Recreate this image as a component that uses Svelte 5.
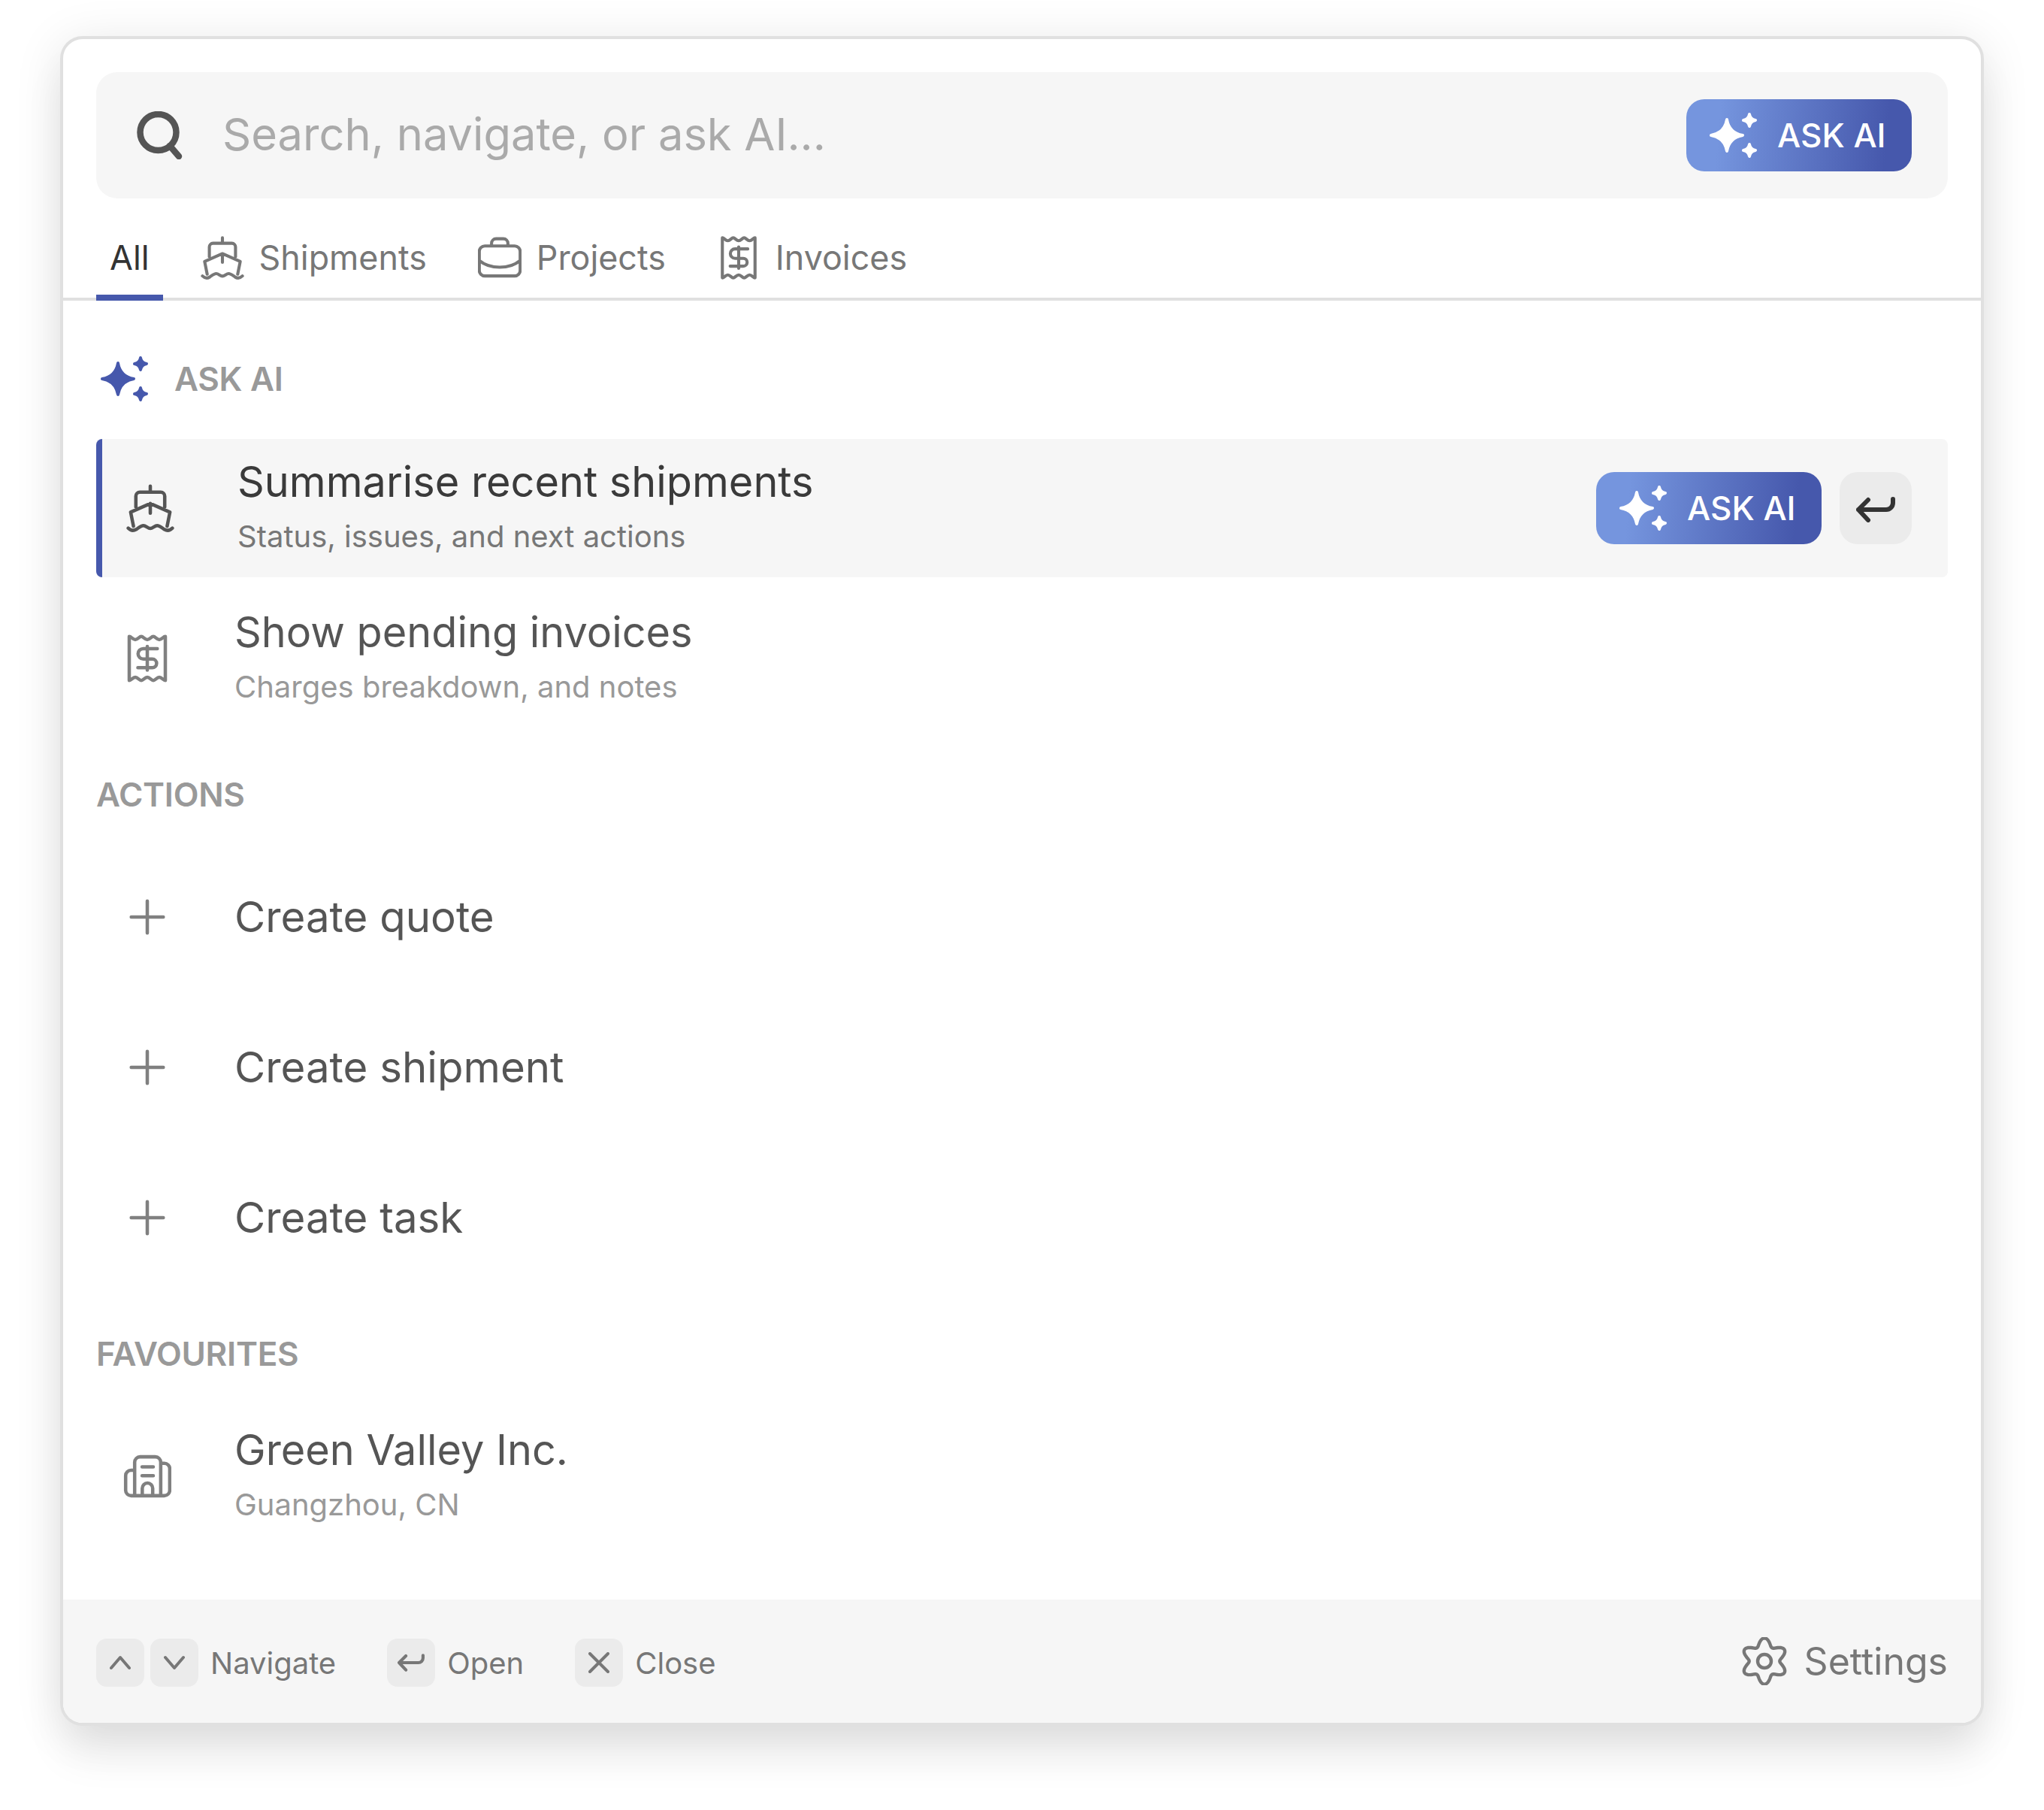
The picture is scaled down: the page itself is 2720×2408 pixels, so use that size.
<script>
	let searchQuery = $state('');

	function star(cx, cy, r) {
		const a = r * 0.1;
		const b = r * 0.42;
		return (
			`M${cx} ${cy - r}C${cx + a} ${cy - b} ${cx + b} ${cy - a} ${cx + r} ${cy}` +
			`C${cx + b} ${cy + a} ${cx + a} ${cy + b} ${cx} ${cy + r}` +
			`C${cx - a} ${cy + b} ${cx - b} ${cy + a} ${cx - r} ${cy}` +
			`C${cx - b} ${cy - a} ${cx - a} ${cy - b} ${cx} ${cy - r}Z`
		);
	}
	const sparkle = star(23, 30, 21) + star(53, 10, 8) + star(53, 50, 8);

	// six soft lobes, top lobe pointing up
	function gearPath() {
		let d = '';
		for (let i = 0; i < 120; i++) {
			const t = (i / 120) * Math.PI * 2;
			const r = 25.5 + 5.2 * Math.cos(6 * t);
			const x = 32 + r * Math.sin(t);
			const y = 32 - r * Math.cos(t);
			d += `${i ? 'L' : 'M'}${x.toFixed(2)} ${y.toFixed(2)}`;
		}
		return d + 'Z';
	}
	const gear = gearPath();

	const icons = {
		ship: 'M12 1v3M4.8 11.5V6a2 2 0 0 1 2-2h10.4a2 2 0 0 1 2 2v5.5M3.6 21 2.2 14 12 9.7 21.8 14l-1.4 7M12 9.7v4.8M1 22c1.2 1.2 2.6 1.4 4 .6 1.2-.8 2.3-1.9 3.6-1.9 1.2 0 2.2 1.4 3.4 1.4s2.2-1.4 3.4-1.4c1.3 0 2.4 1.1 3.6 1.9 1.4.8 2.8.6 4-.6',
		receipt: 'M3 1c1 0 1.7 1.6 3 1.6S8 1 9 1s1.7 1.6 3 1.6S14 1 15 1s1.7 1.6 3 1.6S20 1 21 1v22c-1 0-1.7-1.6-3-1.6S16 23 15 23s-1.7-1.6-3-1.6S10 23 9 23s-1.7-1.6-3-1.6S4 23 3 23ZM17 7.1h-7a2.6 2.6 0 0 0 0 5.2h4.5a2.15 2.15 0 0 1 0 4.3H7.3M12 6v11.8',
		case: 'M3.75 5.5h16.5a3 3 0 0 1 3 3V19a3 3 0 0 1-3 3H3.75a3 3 0 0 1-3-3V8.5a3 3 0 0 1 3-3ZM7.5 5.5V4A2.5 2.5 0 0 1 10 1.5h4A2.5 2.5 0 0 1 16.5 4v1.5M.75 13.5c3 2.5 7 3.7 11.25 3.7s8.25-1.2 11.25-3.7',
		plus: 'M12 4v16M4 12h16',
		building: 'M5.7 21.7V5A2.7 2.7 0 0 1 8.4 2.3h7.6a2.7 2.7 0 0 1 2.7 2.7v16.7M5.7 9H3.9A2.7 2.7 0 0 0 1.2 11.7V19a2.7 2.7 0 0 0 2.7 2.7h16.6a2.7 2.7 0 0 0 2.7-2.7V8.2a2.7 2.7 0 0 0-2.7-2.7h-1.8M9.4 7.3H15M9.4 11.7H15M9.5 21.7V18a2.6 2.6 0 0 1 5.2 0v3.7'
	};

	const tabs = [
		{ label: 'Shipments', icon: 'ship' },
		{ label: 'Projects', icon: 'case' },
		{ label: 'Invoices', icon: 'receipt' }
	];

	const actions = ['Create quote', 'Create shipment', 'Create task'];
</script>

{#snippet icon(name, cls = '')}
	<svg class="icon {cls}" viewBox="0 0 24 24" fill="none" stroke="currentColor" stroke-width="1.7" stroke-linecap="round" stroke-linejoin="round">
		<path d={icons[name]} />
	</svg>
{/snippet}

{#snippet spark(cls)}
	<svg class="spark {cls}" viewBox="0 0 64 60" fill="currentColor" stroke="currentColor" stroke-width="4" stroke-linejoin="round">
		<path d={sparkle} />
	</svg>
{/snippet}

{#snippet askButton()}
	<button class="ask-button">
		{@render spark('')}
		<span>ASK AI</span>
	</button>
{/snippet}

{#snippet enterArrow(cls)}
	<svg class={cls} viewBox="0 0 52 34" fill="none" stroke="currentColor" stroke-width="6" stroke-linecap="round" stroke-linejoin="round">
		<path d="M49 3v5a9 9 0 0 1-9 9H3M16 4 3 17l13 14" />
	</svg>
{/snippet}

<div class="page">
	<div class="palette">
		<!-- Search -->
		<div class="search">
			<svg class="search-icon" viewBox="0 0 64 64" fill="none" stroke="currentColor" stroke-width="8.5" stroke-linecap="round">
				<circle cx="30.5" cy="28" r="24" />
				<path d="M46 46l12 14" />
			</svg>
			<input type="text" placeholder="Search, navigate, or ask AI..." bind:value={searchQuery} />
			{@render askButton()}
		</div>

		<!-- Tabs -->
		<nav class="tabs">
			<button class="tab active">All</button>
			{#each tabs as tab}
				<button class="tab">
					{@render icon(tab.icon, 'tab-icon')}
					{tab.label}
				</button>
			{/each}
		</nav>

		<div class="results">
			<div class="section-title ai-title">
				{@render spark('ai-spark')}
				ASK AI
			</div>

			<div class="row selected">
				<div class="row-icon">{@render icon('ship', 'row-svg')}</div>
				<div class="row-text">
					<div class="row-title">Summarise recent shipments</div>
					<div class="row-sub">Status, issues, and next actions</div>
				</div>
				<div class="row-actions">
					{@render askButton()}
					<span class="enter-key">{@render enterArrow('enter-big')}</span>
				</div>
			</div>

			<div class="row">
				<div class="row-icon">{@render icon('receipt', 'row-svg')}</div>
				<div class="row-text">
					<div class="row-title">Show pending invoices</div>
					<div class="row-sub">Charges breakdown, and notes</div>
				</div>
			</div>

			<div class="section-title">ACTIONS</div>
			{#each actions as action}
				<div class="row">
					<div class="row-icon">{@render icon('plus', 'plus-svg')}</div>
					<div class="row-text single">
						<div class="row-title">{action}</div>
					</div>
				</div>
			{/each}

			<div class="section-title">FAVOURITES</div>
			<div class="row">
				<div class="row-icon">{@render icon('building', 'row-svg')}</div>
				<div class="row-text">
					<div class="row-title">Green Valley Inc.</div>
					<div class="row-sub">Guangzhou, CN</div>
				</div>
			</div>
		</div>

		<!-- Footer -->
		<footer class="footer">
			<div class="hints">
				<div class="hint">
					<span class="key">
						<svg class="key-svg" viewBox="0 0 28 28" fill="none" stroke="currentColor" stroke-width="4" stroke-linecap="round" stroke-linejoin="round"><path d="M2 21 14 7l12 14" /></svg>
					</span>
					<span class="key">
						<svg class="key-svg" viewBox="0 0 28 28" fill="none" stroke="currentColor" stroke-width="4" stroke-linecap="round" stroke-linejoin="round"><path d="M2 7l12 14L26 7" /></svg>
					</span>
					<span class="hint-label">Navigate</span>
				</div>
				<div class="hint">
					<span class="key">{@render enterArrow('enter-small')}</span>
					<span class="hint-label">Open</span>
				</div>
				<div class="hint">
					<span class="key">
						<svg class="key-svg" viewBox="0 0 28 28" fill="none" stroke="currentColor" stroke-width="4" stroke-linecap="round"><path d="M2 2l24 24M26 2 2 26" /></svg>
					</span>
					<span class="hint-label">Close</span>
				</div>
			</div>
			<div class="settings">
				<svg class="gear" viewBox="0 0 64 64" fill="none" stroke="currentColor" stroke-width="4.4" stroke-linejoin="round">
					<path d={gear} />
					<circle cx="32" cy="32" r="9" />
				</svg>
				Settings
			</div>
		</footer>
	</div>
</div>

<style>
	:global(body) {
		margin: 0;
		background: #fff;
	}

	.page {
		width: 2720px;
		height: 2408px;
		padding: 48px 80px 0;
		box-sizing: border-box;
		font-family: Inter, 'Noto Sans', sans-serif;
		overflow: hidden;
	}

	.palette {
		height: 2248px;
		box-sizing: border-box;
		display: flex;
		flex-direction: column;
		background: #fff;
		border: 4px solid #e0e0e0;
		border-radius: 30px;
		overflow: hidden;
		box-shadow: 0 8px 64px rgba(0, 0, 0, 0.1), 0 44px 56px -4px rgba(0, 0, 0, 0.07);
	}

	button {
		font-family: inherit;
		border: none;
		background: none;
		padding: 0;
	}

	.search {
		margin: 44px 44px 0;
		height: 168px;
		flex: none;
		display: flex;
		align-items: center;
		padding: 0 48px 0 52px;
		background: #f6f6f6;
		border-radius: 28px;
	}

	.search-icon {
		width: 64px;
		height: 64px;
		flex: none;
		color: #555;
	}

	.search input {
		flex: 1;
		min-width: 0;
		margin: 0 0 4px 52px;
		border: none;
		outline: none;
		background: none;
		padding: 0;
		font-family: inherit;
		font-size: 59.6px;
		color: #333;
	}

	.search input::placeholder {
		color: #aaa;
		opacity: 1;
	}

	.ask-button {
		width: 300px;
		height: 96px;
		flex: none;
		display: flex;
		align-items: center;
		gap: 26px;
		padding-left: 31px;
		box-sizing: border-box;
		border-radius: 24px;
		background: linear-gradient(95deg, #7595de 15%, #4658ac 88%);
		color: #fff;
		font-size: 44px;
		font-weight: 500;
	}

	.spark {
		width: 64px;
		height: 60px;
		flex: none;
	}

	.tabs {
		flex: none;
		display: flex;
		gap: 32px;
		height: 132px;
		padding: 0 44px;
		border-bottom: 4px solid #e0e0e0;
	}

	.tab {
		display: flex;
		align-items: center;
		gap: 20px;
		height: 136px;
		padding: 30px 18px 0;
		box-sizing: border-box;
		border-bottom: 8px solid transparent;
		font-size: 44.8px;
		color: #777;
	}

	.tab.active {
		color: #333;
		border-bottom-color: #4658ac;
	}

	.tab-icon {
		width: 58px;
		height: 58px;
	}

	.icon {
		flex: none;
	}

	.results {
		flex: 1;
		display: flex;
		flex-direction: column;
		padding: 0 44px;
	}

	.section-title {
		height: 64px;
		margin: 41px 0 39px;
		display: flex;
		align-items: center;
		font-size: 44px;
		font-weight: 600;
		letter-spacing: -0.3px;
		color: #999;
	}

	.ai-title {
		margin: 72px 0 48px;
		gap: 34px;
		padding-left: 6px;
	}

	.ai-spark {
		color: #4658ac;
	}

	.row {
		height: 184px;
		flex: none;
		display: flex;
		align-items: center;
		padding-left: 8px;
		margin-bottom: 16px;
		box-sizing: border-box;
		border-radius: 8px;
	}

	.row:last-child {
		margin-bottom: 0;
	}

	.row.selected {
		padding-left: 4px;
		padding-right: 48px;
		background: #f6f6f6;
		border-left: 8px solid #4658ac;
	}

	.row-icon {
		width: 120px;
		flex: none;
		display: flex;
		justify-content: center;
		color: #808080;
	}

	.selected .row-icon {
		color: #555;
	}

	.row-svg {
		width: 64px;
		height: 64px;
	}

	.plus-svg {
		width: 64px;
		height: 64px;
	}

	.row-text {
		flex: 1;
		margin-left: 56px;
		padding-bottom: 7px;
		display: flex;
		flex-direction: column;
		gap: 15px;
	}

	.row-text.single {
		padding-bottom: 0;
	}

	.row-title {
		font-size: 55.8px;
		line-height: 68px;
		color: #555;
	}

	.single .row-title {
		font-size: 56.4px;
	}

	.selected .row-title {
		color: #3a3a3a;
	}

	.row-sub {
		font-size: 40px;
		line-height: 48px;
		color: #999;
	}

	.selected .row-sub {
		color: #777;
	}

	.row-actions {
		display: flex;
		align-items: center;
		gap: 24px;
	}

	.enter-key {
		width: 96px;
		height: 96px;
		display: flex;
		align-items: center;
		justify-content: center;
		border-radius: 24px;
		background: #ebebeb;
		color: #333;
	}

	.enter-big {
		width: 52px;
		height: 34px;
		margin-top: 3px;
	}

	.footer {
		flex: none;
		height: 164px;
		display: flex;
		align-items: center;
		justify-content: space-between;
		padding: 4px 44px 0;
		box-sizing: border-box;
		background: #f6f6f6;
		color: #777;
	}

	.hints {
		display: flex;
		gap: 68px;
	}

	.hint {
		display: flex;
		align-items: center;
		gap: 8px;
		font-size: 40px;
	}

	.hint-label {
		margin-left: 8px;
	}

	.key {
		width: 64px;
		height: 64px;
		display: flex;
		align-items: center;
		justify-content: center;
		border-radius: 14px;
		background: #ebebeb;
	}

	.key-svg {
		width: 28px;
		height: 28px;
	}

	.enter-small {
		width: 36px;
		height: 24px;
	}

	.settings {
		display: flex;
		align-items: center;
		gap: 21px;
		margin-top: -4px;
		font-size: 50px;
	}

	.gear {
		width: 64px;
		height: 64px;
	}
</style>
